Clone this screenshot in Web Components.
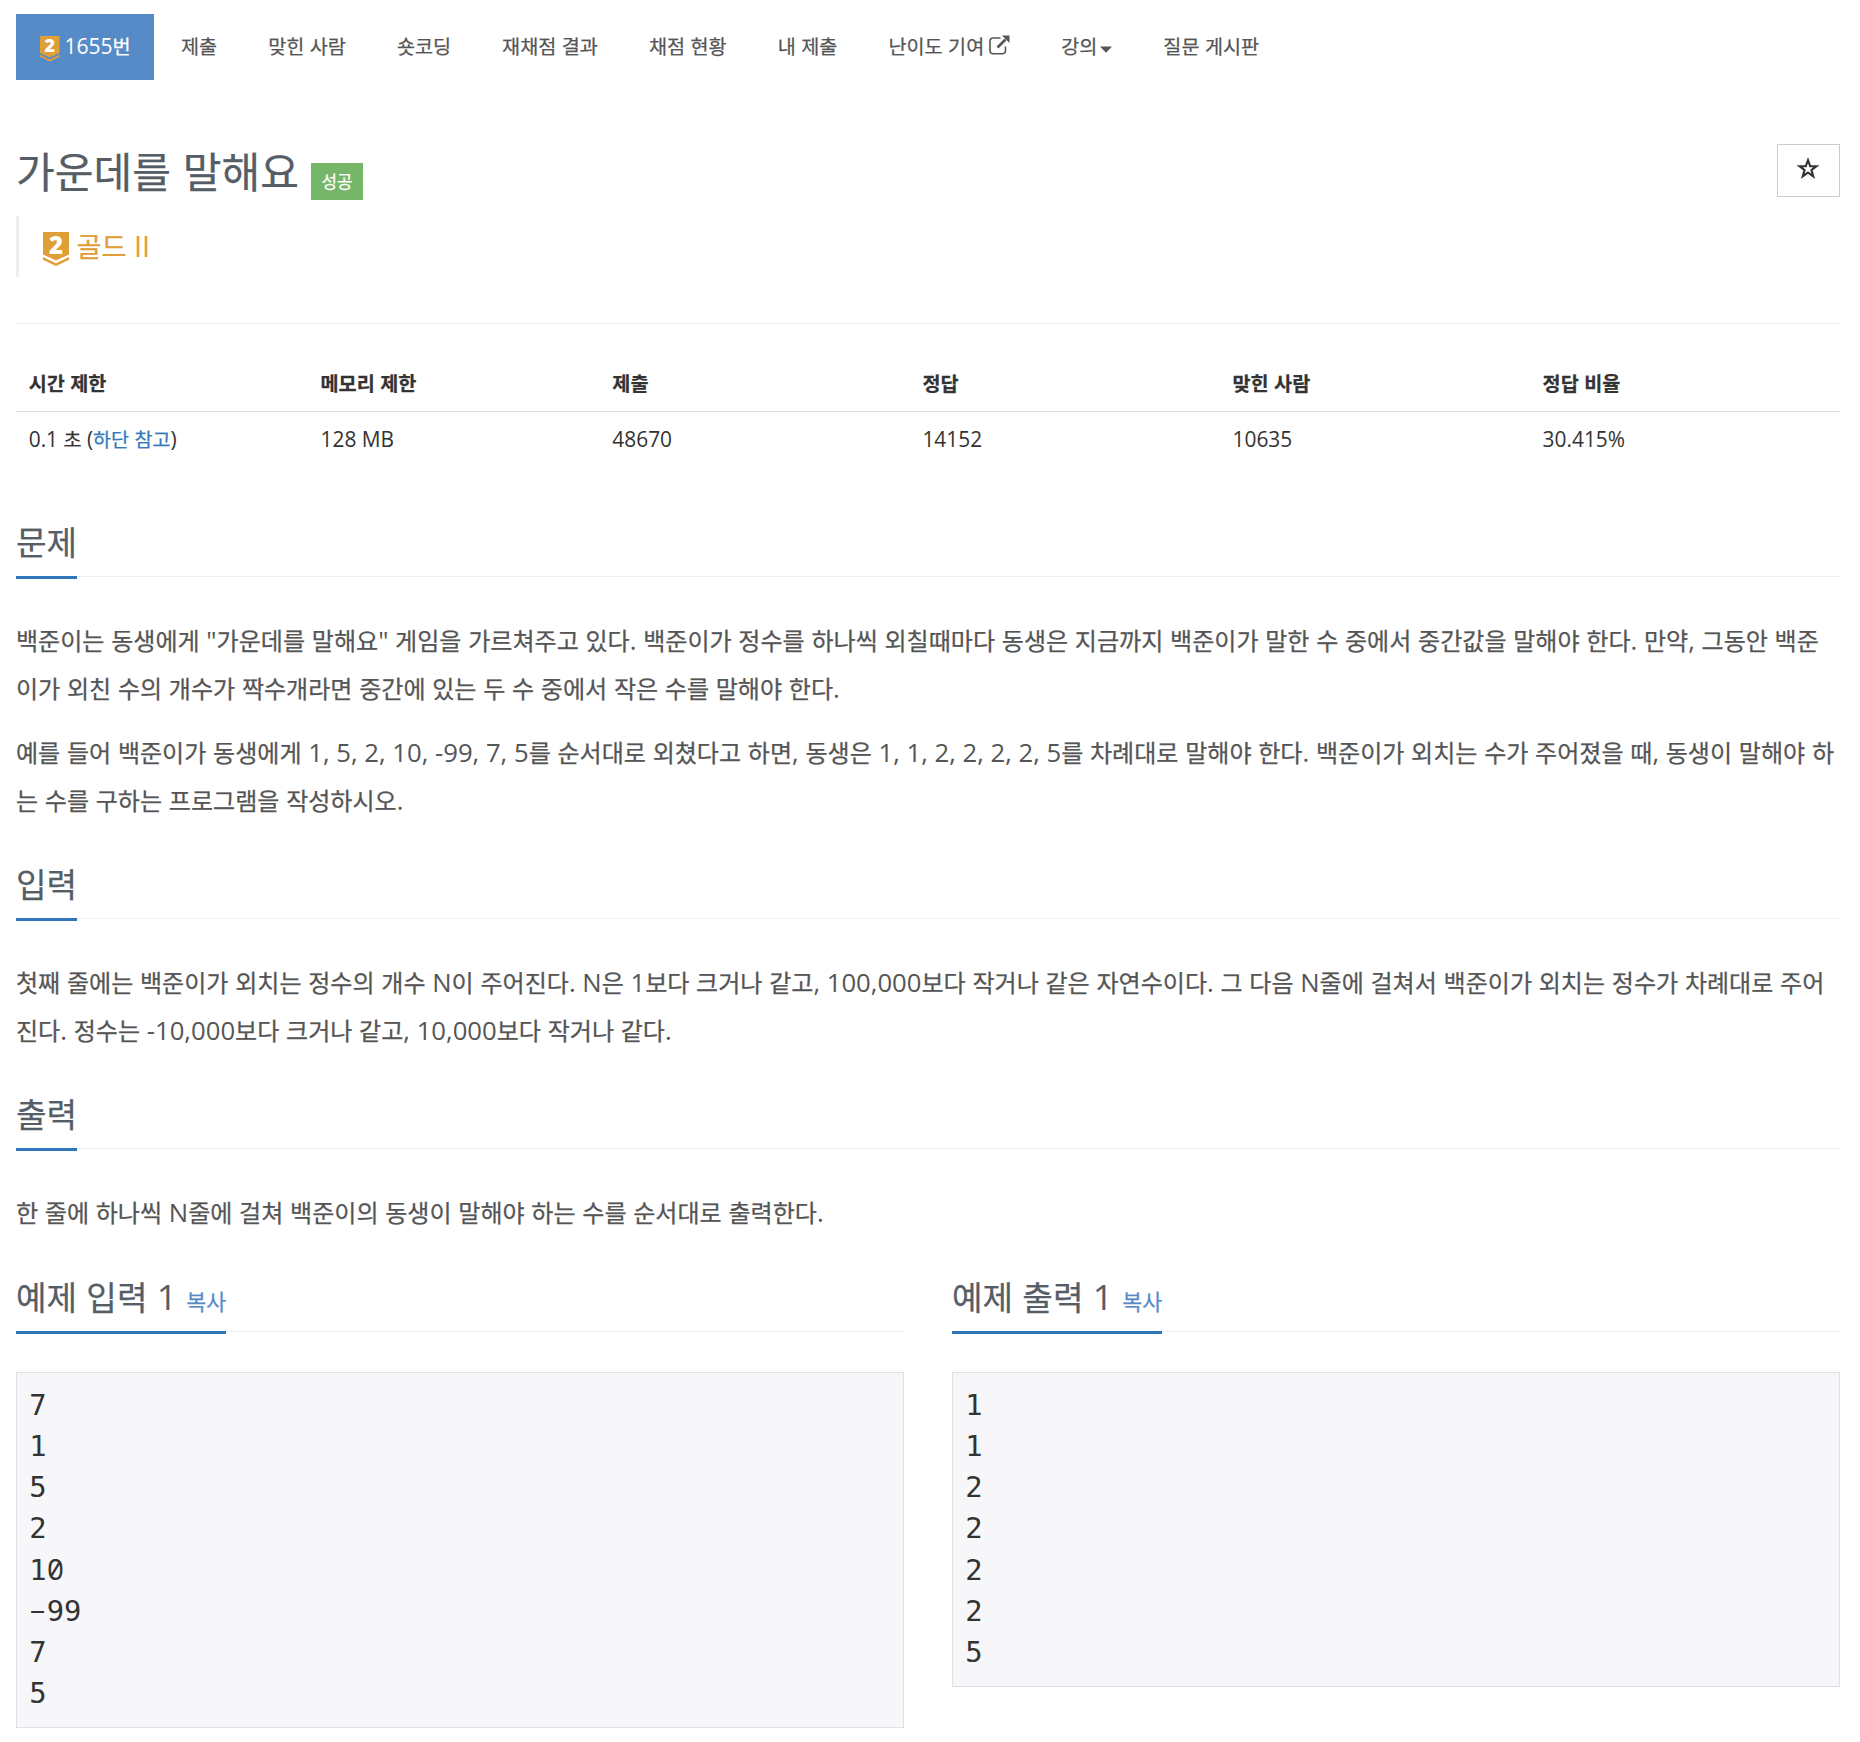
<!DOCTYPE html>
<html lang="ko">
<head>
<meta charset="utf-8">
<title>1655번: 가운데를 말해요</title>
<style>
  body { margin: 0; background: #fff; color: #333; font: 21px/30px "Open Sans", "Noto Sans CJK KR", sans-serif; }
</style>
</head>
<body>
<problem-page></problem-page>
<script>
const esc = s => s.replace(/&/g, '&amp;').replace(/</g, '&lt;');

/* Hangul is set a little smaller than the Latin text beside it. */
class KoText extends HTMLElement {
  connectedCallback() {
    if (this.shadowRoot) return;
    const root = this.attachShadow({ mode: 'open' });
    root.innerHTML = `<style>:host{display:inline} span{font-size:.936em;line-height:0;-webkit-text-stroke:.25px currentColor}</style>` +
      esc(this.getAttribute('text')).replace(/[\uac00-\ud7a3]+/g, m => `<span>${m}</span>`);
  }
}
customElements.define('ko-text', KoText);
const ko = s => `<ko-text text="${s.replace(/"/g, '&quot;')}"></ko-text>`;

class TierBadge extends HTMLElement {
  connectedCallback() {
    this.attachShadow({ mode: 'open' }).innerHTML = `
      <style>:host{display:block;width:26px;height:34px;flex:none} svg{display:block;width:100%;height:100%;overflow:visible}
      text{font:800 24px "Open Sans",sans-serif;fill:#fff}</style>
      <svg viewBox="0 0 26 34"><path d="M0 0h26v22.5l-13 6-13-6z M0 25l13 6.200 13-6.200v2.800l-13 6.200-13-6.200z" fill="#e09e37"/>
      <text x="13" y="21.500" text-anchor="middle">2</text></svg>`;
  }
}
customElements.define('tier-badge', TierBadge);

class NavTab extends HTMLElement {
  connectedCallback() {
    this.attachShadow({ mode: 'open' }).innerHTML = `
      <style>:host{display:flex;align-items:center;height:66px;padding:0 24px 2px;color:#555;white-space:nowrap;box-sizing:border-box}
      :host([active]){width:138px;background:#568bc7;color:#fff}</style><slot></slot>`;
  }
}
customElements.define('nav-tab', NavTab);

class ProblemNav extends HTMLElement {
  connectedCallback() {
    const t = s => `<nav-tab>${ko(s)}</nav-tab>`;
    this.attachShadow({ mode: 'open' }).innerHTML = `
      <style>:host{display:flex;gap:3px;height:66px}
      tier-badge{width:19.500px;height:25.500px;margin:5px 5px 0 0}
      .ext{width:21px;height:20px;margin:-2px 0 0 5px}.caret{width:12px;height:7px;margin:6px 0 0 3px}
      svg{display:block;flex:none}</style>
      <nav-tab active><tier-badge></tier-badge>${ko('1655번')}</nav-tab>
      ${['제출', '맞힌 사람', '숏코딩', '재채점 결과', '채점 현황', '내 제출'].map(t).join('')}
      <nav-tab>${ko('난이도 기여')}<svg class="ext" viewBox="0 0 21 20" fill="none" stroke="#555">
        <path d="M11.500 3H4.300Q1 3 1 6.300V15.500Q1 18.800 4.300 18.800H13.200Q16.500 18.800 16.500 15.500V11.500" stroke-width="1.600"/>
        <path d="M8.500 12.500L16.500 4.500" stroke-width="2.600"/><path d="M13 0.500H20.500V8z" fill="#555" stroke="none"/></svg></nav-tab>
      <nav-tab>${ko('강의')}<svg class="caret" viewBox="0 0 12 7"><path d="M0 .5h12l-6 6.200z" fill="#555"/></svg></nav-tab>
      ${t('질문 게시판')}`;
  }
}
customElements.define('problem-nav', ProblemNav);

class ProblemTitle extends HTMLElement {
  connectedCallback() {
    this.attachShadow({ mode: 'open' }).innerHTML = `
      <style>:host{display:block}
      .row{display:flex;justify-content:space-between;align-items:flex-start;height:72px}
      .left{display:flex;align-items:flex-start}
      h1{margin:1px 0 0;font-size:45px;line-height:52px;font-weight:400;color:#555d67}
      .label{margin:19px 0 0 12px;width:52px;height:37px;background:#76b668;color:#fff;font-size:18px;line-height:36px;text-align:center}
      button{all:unset;box-sizing:border-box;width:63px;height:53px;border:1px solid #ccc;display:flex;align-items:center;justify-content:center}
      svg{margin:-4px 2px 0 0}
      .tier{display:flex;border-left:3px solid #eee;height:61px;box-sizing:border-box;padding:15px 0 0 24px;gap:7.500px;font-size:29px;line-height:30px;color:#e09e37}
      tier-badge{margin-top:1px}
      </style>
      <div class="row"><div class="left"><h1>${ko('가운데를 말해요')}</h1><span class="label">${ko('성공')}</span></div>
      <button aria-label="즐겨찾기"><svg width="24" height="23" viewBox="0 0 24 23"><path d="M12 3.200l2.200 6h6.200l-5 3.900 1.900 6.300L12 15.600l-5.300 3.800 1.900-6.300-5-3.900h6.200z" fill="none" stroke="#333" stroke-width="2.100"/></svg></button></div>
      <div class="tier"><tier-badge></tier-badge>${ko('골드 II')}</div>`;
  }
}
customElements.define('problem-title', ProblemTitle);

class InfoTable extends HTMLElement {
  connectedCallback() {
    const head = ['시간 제한', '메모리 제한', '제출', '정답', '맞힌 사람', '정답 비율'];
    const row = ['128 MB', '48670', '14152', '10635', '30.415%'];
    this.attachShadow({ mode: 'open' }).innerHTML = `
      <style>:host{display:block}
      .r{display:grid;grid-template-columns:16% 16% 17% 17% 17% 17%}
      .r>div{padding:0 12.700px}.h{font-weight:700;line-height:52px;padding-bottom:2px;border-bottom:1px solid #ddd}.b{font-size:20.900px;line-height:54px}
      a{color:#337ab7}</style>
      <div class="r h">${head.map(s => `<div>${ko(s)}</div>`).join('')}</div>
      <div class="r b"><div>${ko('0.1 초 (')}<a>${ko('하단 참고')}</a>)</div>${row.map(s => `<div>${s}</div>`).join('')}</div>`;
  }
}
customElements.define('info-table', InfoTable);

class SectionHeading extends HTMLElement {
  connectedCallback() {
    this.attachShadow({ mode: 'open' }).innerHTML = `
      <style>:host{display:flex;align-items:flex-start;height:54px;border-bottom:1px dotted #dfe0e8}
      h2{margin:0;font-size:35.500px;line-height:38px;height:54px;font-weight:400;color:#555d67;border-bottom:3px solid #2e75bb;white-space:nowrap}
      a{font-size:23.200px;color:#568bc7}</style><h2>${ko(this.getAttribute('label'))}${this.hasAttribute('copy') ? ` <a>${ko('복사')}</a>` : ''}</h2>`;
  }
}
customElements.define('section-heading', SectionHeading);

class ProblemSection extends HTMLElement {
  connectedCallback() {
    const ps = JSON.parse(this.querySelector('script').textContent);
    this.attachShadow({ mode: 'open' }).innerHTML = `
      <style>:host{display:block}
      .body{margin:39.500px 0 -.500px;display:flex;flex-direction:column;gap:16px;color:#555;font-size:25.700px;line-height:48px}
      p{margin:0;white-space:nowrap}</style>
      <section-heading label="${this.getAttribute('label')}"></section-heading>
      <div class="body">${ps.map(p => `<p>${p.map(ko).join('<br>')}</p>`).join('')}</div>`;
  }
}
customElements.define('problem-section', ProblemSection);

class SampleBlock extends HTMLElement {
  connectedCallback() {
    const lines = this.getAttribute('data').split(' ').map(s => `<div>${s.replace('0', '<b>0</b>').replace('-', '<i><u>-</u></i>')}</div>`).join('');
    this.attachShadow({ mode: 'open' }).innerHTML = `
      <style>:host{display:block;flex:1 1 0}
      pre{margin:40px 0 0;padding:12px 12.300px 13px;border:1px solid #dfdfe6;background:#f7f7f9;color:#333;font:28.800px/41.140px "DejaVu Sans Mono",monospace}
      pre div{height:41.140px}
      b{font:400 29px/0 "Noto Sans Mono","DejaVu Sans Mono",monospace}
      i{font-style:normal;display:inline-block;width:17.340px;line-height:30px;text-align:center}
      u{font-family:"Open Sans",sans-serif;text-decoration:none;display:inline-block;line-height:30px;transform:translateY(-1px) scaleX(1.850)}</style>
      <section-heading copy label="${this.getAttribute('label')}"></section-heading><pre>${lines}</pre>`;
  }
}
customElements.define('sample-block', SampleBlock);

class ProblemPage extends HTMLElement {
  connectedCallback() {
    const sec = (label, ps) => `<problem-section label="${label}"><script type="application/json">${JSON.stringify(ps)}<\/script></problem-section>`;
    this.attachShadow({ mode: 'open' }).innerHTML = `
      <style>:host{display:block;box-sizing:border-box;width:1860px;height:1742px;padding:14px 20px 0 16px;overflow:hidden}
      problem-title{margin-top:64px}
      hr{border:0;border-top:1px solid #eee;margin:46px 0 33px}
      .sections{display:flex;flex-direction:column;gap:40px;margin-top:56px}
      .samples{display:flex;gap:48px;margin-top:1px}</style>
      <problem-nav></problem-nav>
      <problem-title></problem-title>
      <hr>
      <info-table></info-table>
      <div class="sections">
      ${sec('문제', [['백준이는 동생에게 "가운데를 말해요" 게임을 가르쳐주고 있다. 백준이가 정수를 하나씩 외칠때마다 동생은 지금까지 백준이가 말한 수 중에서 중간값을 말해야 한다. 만약, 그동안 백준', '이가 외친 수의 개수가 짝수개라면 중간에 있는 두 수 중에서 작은 수를 말해야 한다.'], ['예를 들어 백준이가 동생에게 1, 5, 2, 10, -99, 7, 5를 순서대로 외쳤다고 하면, 동생은 1, 1, 2, 2, 2, 2, 5를 차례대로 말해야 한다. 백준이가 외치는 수가 주어졌을 때, 동생이 말해야 하', '는 수를 구하는 프로그램을 작성하시오.']])}
      ${sec('입력', [['첫째 줄에는 백준이가 외치는 정수의 개수 N이 주어진다. N은 1보다 크거나 같고, 100,000보다 작거나 같은 자연수이다. 그 다음 N줄에 걸쳐서 백준이가 외치는 정수가 차례대로 주어', '진다. 정수는 -10,000보다 크거나 같고, 10,000보다 작거나 같다.']])}
      ${sec('출력', [['한 줄에 하나씩 N줄에 걸쳐 백준이의 동생이 말해야 하는 수를 순서대로 출력한다.']])}
      <div class="samples"><sample-block label="예제 입력 1" data="7 1 5 2 10 -99 7 5"></sample-block><sample-block label="예제 출력 1" data="1 1 2 2 2 2 5"></sample-block></div>
      </div>`;
  }
}
customElements.define('problem-page', ProblemPage);
</script>
</body>
</html>
